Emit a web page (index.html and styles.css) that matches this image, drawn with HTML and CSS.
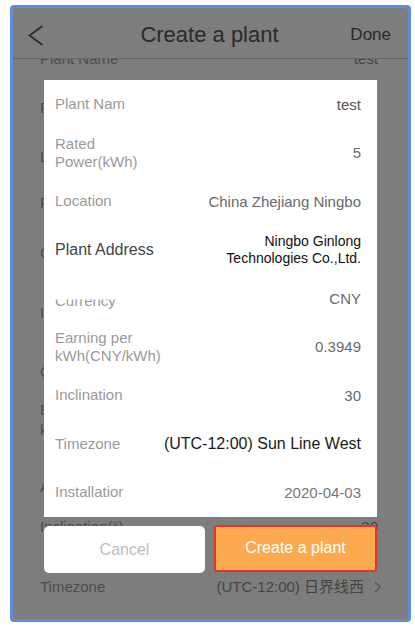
FILE: index.html
```html
<!DOCTYPE html>
<html lang="en">
<head>
<meta charset="utf-8">
<title>Create a plant</title>
<link rel="stylesheet" href="styles.css">
</head>
<body>
<div class="frame">
  <div class="screen">
    <header class="nav">
      <svg class="back" width="16" height="22" viewBox="0 0 16 22" aria-hidden="true"><path d="M14.5 1 L1.5 10.5 L14.5 20" fill="none" stroke="#555" stroke-width="1.7"/></svg>
      <h1 class="title">Create a plant</h1>
      <span class="done">Done</span>
    </header>
    <div class="list">
      <div class="list-inner">
        <div class="row r1"><span class="lbl">Plant Name</span><span class="val">test</span></div>
        <div class="row r2"><span class="lbl">Plant Type</span></div>
        <div class="row r3"><span class="lbl">Location</span></div>
        <div class="row r4"><span class="lbl">Plant Address</span></div>
        <div class="row r5"><span class="lbl">Currency</span></div>
        <div class="row r6"><span class="lbl">Installed capacity</span></div>
        <div class="row r7"><span class="lbl">Contact</span></div>
        <div class="row r8"><span class="lbl">Earning per<br>kWh(CNY/kWh)</span></div>
        <div class="row r9"><span class="lbl">Azimuth</span></div>
        <div class="row r10"><span class="lbl">Inclination(°)</span><span class="val">30</span></div>
        <div class="row r11"><span class="lbl">Timezone</span><span class="val tz">(UTC-12:00) 日界线西<svg class="chev" width="7" height="12" viewBox="0 0 7 12" aria-hidden="true"><path d="M1 1 L6 6 L1 11" fill="none" stroke="#aaa" stroke-width="1.3"/></svg></span></div>
      </div>
    </div>
  </div>
  <div class="overlay">
    <div class="modal">
      <div class="mrow"><span class="mlbl">Plant Nam</span><span class="mval dark">test</span></div>
      <div class="mrow"><span class="mlbl wrap">Rated Power(kWh)</span><span class="mval">5</span></div>
      <div class="mrow"><span class="mlbl">Location</span><span class="mval">China Zhejiang Ningbo</span></div>
      <div class="mrow"><span class="mlbl strong">Plant Address</span><span class="mval addr">Ningbo Ginlong<br>Technologies Co.,Ltd.</span></div>
      <div class="mrow"><span class="mlbl cut">Currency</span><span class="mval">CNY</span></div>
      <div class="mrow"><span class="mlbl wrap">Earning per kWh(CNY/kWh)</span><span class="mval">0.3949</span></div>
      <div class="mrow"><span class="mlbl">Inclination</span><span class="mval">30</span></div>
      <div class="mrow"><span class="mlbl">Timezone</span><span class="mval black">(UTC-12:00) Sun Line West</span></div>
      <div class="mrow"><span class="mlbl">Installatior</span><span class="mval light">2020-04-03</span></div>
    </div>
    <div class="actions">
      <button class="btn cancel" type="button">Cancel</button>
      <button class="btn create" type="button">Create a plant</button>
    </div>
  </div>
</div>
</body>
</html>
```

FILE: styles.css
```css
* { box-sizing: border-box; }

html, body {
  margin: 0;
  padding: 0;
  background: #ffffff;
}

body {
  font-family: "Liberation Sans", Arial, "Noto Sans CJK SC", sans-serif;
}

.frame {
  position: relative;
  margin: 5px 0 0 10px;
  width: 401px;
  height: 617px;
  border: 3px solid #5b8fd9;
  border-radius: 4px;
  overflow: hidden;
  background: #fafafa;
}

.screen {
  height: 100%;
  display: flex;
  flex-direction: column;
}

.nav {
  position: relative;
  z-index: 1;
  height: 51px;
  flex: none;
  display: grid;
  grid-template-columns: 1fr auto 1fr;
  align-items: center;
  padding: 4px 17px 0 15px;
  background: #fafafa;
  border-bottom: 1px solid #d0d0d0;
}

.back { display: block; margin-top: 2px; }

.title {
  margin: 0;
  font-weight: normal;
  font-size: 22px;
  color: #555;
}

.done {
  justify-self: end;
  font-size: 17px;
  color: #555;
}

.list {
  flex: 1;
  overflow: hidden;
}

.list-inner { margin-top: -10px; }

.row {
  display: flex;
  justify-content: space-between;
  align-items: center;
  padding: 0 30px 0 27px;
  font-size: 15px;
  line-height: 20px;
  color: #999;
}

.r1 { margin-top: 0; }
.r2 { margin-top: 29px; }
.r3 { margin-top: 29px; }
.r4 { margin-top: 26px; }
.r5 { margin-top: 30px; }
.r6 { margin-top: 40px; }
.r7 { margin-top: 39px; }
.r8 { margin-top: 18px; }
.r9 { margin-top: 37px; }
.r10 { margin-top: 20px; }
.r11 { margin-top: 40px; }

.val { color: #8a8a8a; }

.tz {
  display: flex;
  align-items: center;
  gap: 10px;
  margin-right: -3px;
  font-family: "Liberation Sans", Arial, "Noto Sans CJK SC", sans-serif;
}

.chev { display: block; }

.overlay {
  position: absolute;
  inset: 0;
  z-index: 2;
  background: rgba(0, 0, 0, 0.5);
  padding: 72px 31px 0;
}

.modal {
  background: #ffffff;
}

.mrow {
  height: 48.5px;
  display: flex;
  justify-content: space-between;
  align-items: center;
  padding: 0 16px 0 11px;
}

.mlbl {
  font-size: 15px;
  line-height: 18px;
  color: #9a9a9a;
}

.mlbl.wrap { max-width: 116px; }

.mlbl.strong {
  font-size: 16px;
  color: #444;
}

.mlbl.cut {
  clip-path: inset(40% 0 0 0);
  margin-top: 6px;
}

.mval {
  font-size: 15px;
  color: #6a6a6a;
  text-align: right;
}

.mval.dark { color: #555; }
.mval.light { color: #777; }

.mval.addr {
  font-size: 14px;
  line-height: 17px;
  color: #111;
}

.mval.black {
  font-size: 16px;
  color: #1a1a1a;
}

.actions {
  display: flex;
  gap: 9px;
  margin-top: 9px;
}

.btn {
  height: 47px;
  font-family: "Liberation Sans", Arial, sans-serif;
  font-size: 16px;
  padding: 0;
  cursor: pointer;
}

.cancel {
  width: 161px;
  background: #ffffff;
  border: 0;
  border-radius: 5px;
  color: #bdbdbd;
  padding-top: 2px;
}

.create {
  flex: 1;
  background: #fcaa50;
  border: 2px solid #e3352b;
  border-radius: 3px;
  color: #ffffff;
  margin-top: -1px;
}
```
